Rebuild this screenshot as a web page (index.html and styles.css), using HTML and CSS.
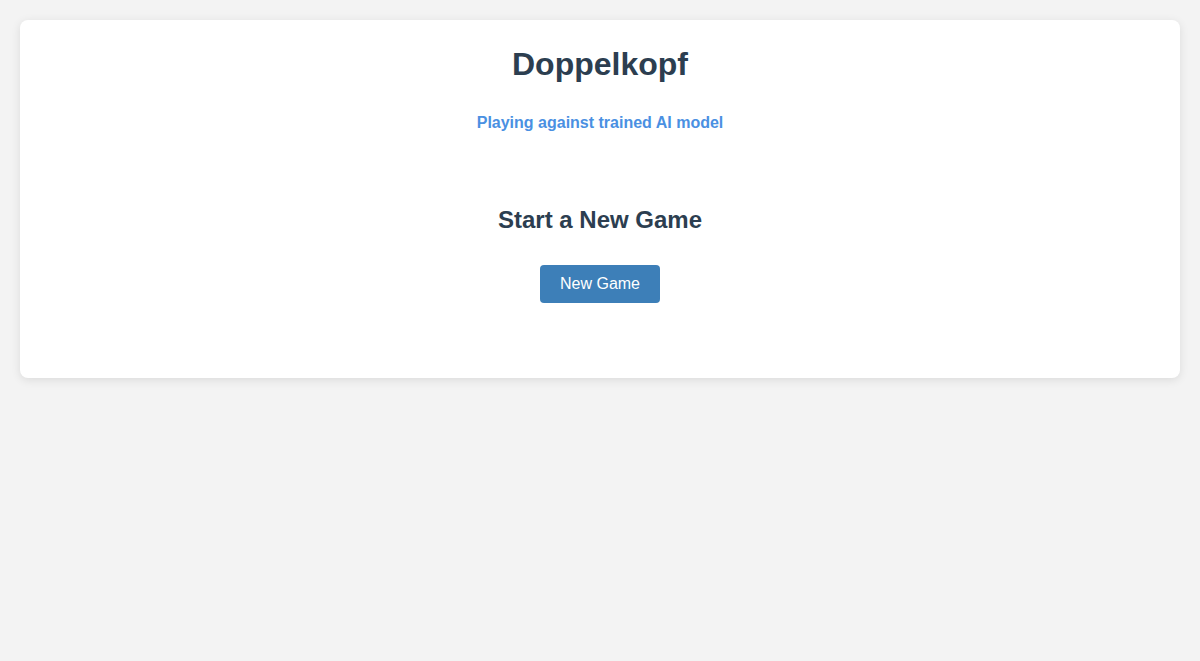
FILE: index.html
```html
<!DOCTYPE html>
<html lang="en">
<head>
<meta charset="utf-8">
<title>Doppelkopf</title>
<link rel="stylesheet" href="styles.css">
</head>
<body>
<div class="card">
  <header class="header">
    <h1 class="title">Doppelkopf</h1>
    <p class="subtitle">Playing against trained AI model</p>
  </header>
  <section class="start">
    <h2 class="start-title">Start a New Game</h2>
    <button class="btn" type="button">New Game</button>
  </section>
</div>
</body>
</html>
```
FILE: styles.css
```css
html, body {
  margin: 0;
  padding: 0;
}
body {
  background: #f3f3f3;
  font-family: "Liberation Sans", Arial, sans-serif;
  padding: 20px;
  min-height: 661px;
  box-sizing: border-box;
}
.card {
  background: #ffffff;
  border-radius: 8px;
  box-shadow: 0 2px 10px rgba(0, 0, 0, 0.1);
  padding: 26px 20px 75px;
  text-align: center;
}
.header {
  display: flex;
  flex-direction: column;
  align-items: center;
}
.title {
  margin: 0;
  font-size: 32px;
  line-height: 37px;
  font-weight: bold;
  color: #2c3e50;
}
.subtitle {
  margin: 31px 0 0;
  font-size: 16px;
  line-height: 18px;
  font-weight: bold;
  color: #4a90e2;
}
.start {
  display: flex;
  flex-direction: column;
  align-items: center;
  margin-top: 74px;
}
.start-title {
  margin: 0;
  font-size: 24px;
  line-height: 28px;
  font-weight: bold;
  color: #2c3e50;
}
.btn {
  margin-top: 31px;
  height: 38px;
  padding: 0 20px;
  border: none;
  border-radius: 4px;
  background: #3d7fb8;
  color: #ffffff;
  font-family: "Liberation Sans", Arial, sans-serif;
  font-size: 16px;
  cursor: pointer;
}
```
